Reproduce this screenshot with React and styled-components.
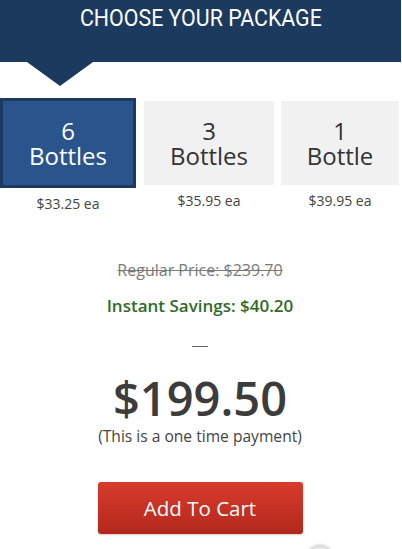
import React from "react";
import styled, { createGlobalStyle } from "styled-components";

const Global = createGlobalStyle`
  html, body { margin: 0; padding: 0; background: #fff; }
  body { font-family: "Open Sans", "Lato", sans-serif; overflow: hidden; }
`;

const Page = styled.div`
  width: 402px;
  height: 549px;
  position: relative;
  overflow: hidden;
`;

const Header = styled.div`
  width: 401px;
  height: 62px;
  background: #1b3a5e;
  display: flex;
  justify-content: center;
  box-sizing: border-box;
  padding-top: 4px;
`;

const Title = styled.h1`
  margin: 0;
  font-family: "Roboto", sans-serif;
  font-weight: 400;
  font-size: 24px;
  line-height: 28px;
  color: #fff;
  display: inline-block;
  transform: scaleX(0.89);
  white-space: nowrap;
`;

const Arrow = styled.div`
  width: 0;
  height: 0;
  margin-left: 27px;
  border-left: 33px solid transparent;
  border-right: 33px solid transparent;
  border-top: 24px solid #1b3a5e;
`;

const Options = styled.div`
  display: flex;
  align-items: flex-start;
  margin-top: 12px;
`;

const Option = styled.div`
  display: flex;
  flex-direction: column;
  align-items: center;
  width: ${(p) => p.$w}px;
  margin-left: ${(p) => p.$ml}px;
  margin-top: ${(p) => (p.$selected ? 0 : 3)}px;
`;

const Box = styled.div`
  width: 100%;
  height: ${(p) => (p.$selected ? 90 : 84)}px;
  box-sizing: border-box;
  background: ${(p) => (p.$selected ? "#2a558c" : "#f1f1f1")};
  border: ${(p) => (p.$selected ? "3px solid #1c3a60" : "none")};
  color: ${(p) => (p.$selected ? "#fff" : "#333")};
  display: flex;
  flex-direction: column;
  align-items: center;
  justify-content: center;
  font-size: 24px;
  line-height: 25px;
`;

const BoxLine = styled.div`
  height: 25px;
`;

const Each = styled.div`
  margin-top: 8px;
  font-size: 14px;
  line-height: 16px;
  color: #444;
`;

const Summary = styled.div`
  display: flex;
  flex-direction: column;
  align-items: center;
  width: 400px;
`;

const Regular = styled.div`
  margin-top: 48px;
  font-size: 16px;
  line-height: 20px;
  color: #7a7a7a;
  text-decoration: line-through;
`;

const Savings = styled.div`
  margin-top: 16px;
  font-size: 17px;
  line-height: 20px;
  font-weight: 600;
  color: #2f6b2a;
`;

const Dash = styled.div`
  margin-top: 30px;
  width: 16px;
  height: 1px;
  background: #666;
`;

const Price = styled.div`
  margin-top: 23px;
  font-size: 47px;
  line-height: 56px;
  font-weight: 600;
  color: #3c3c3c;
`;

const Note = styled.div`
  font-size: 15.6px;
  line-height: 20px;
  color: #444;
`;

const CartButton = styled.button`
  margin-top: 36px;
  width: 205px;
  height: 52px;
  border: none;
  border-radius: 3px;
  background: linear-gradient(#d83b2c, #b3281c);
  color: #fff;
  font-family: "Open Sans", sans-serif;
  font-size: 20.5px;
  box-shadow: 0 1px 2px rgba(0, 0, 0, 0.2);
`;

const ScrollTop = styled.div`
  position: absolute;
  left: 307px;
  top: 546px;
  width: 26px;
  height: 26px;
  border-radius: 50%;
  background: #e6e6e6;
  box-shadow: 0 -1px 3px rgba(0, 0, 0, 0.25);
`;

const options = [
  { n: "6", label: "Bottles", each: "$33.25 ea", w: 136, ml: 0, selected: true },
  { n: "3", label: "Bottles", each: "$35.95 ea", w: 130, ml: 8 },
  { n: "1", label: "Bottle", each: "$39.95 ea", w: 118, ml: 7 },
];

export default function App() {
  return (
    <Page>
      <Global />
      <Header>
        <Title>CHOOSE YOUR PACKAGE</Title>
      </Header>
      <Arrow />
      <Options>
        {options.map((o) => (
          <Option key={o.n} $w={o.w} $ml={o.ml} $selected={o.selected}>
            <Box $selected={o.selected}>
              <BoxLine>{o.n}</BoxLine>
              <BoxLine>{o.label}</BoxLine>
            </Box>
            <Each>{o.each}</Each>
          </Option>
        ))}
      </Options>
      <Summary>
        <Regular>Regular Price: $239.70</Regular>
        <Savings>Instant Savings: $40.20</Savings>
        <Dash />
        <Price>$199.50</Price>
        <Note>(This is a one time payment)</Note>
        <CartButton>Add To Cart</CartButton>
      </Summary>
      <ScrollTop />
    </Page>
  );
}
